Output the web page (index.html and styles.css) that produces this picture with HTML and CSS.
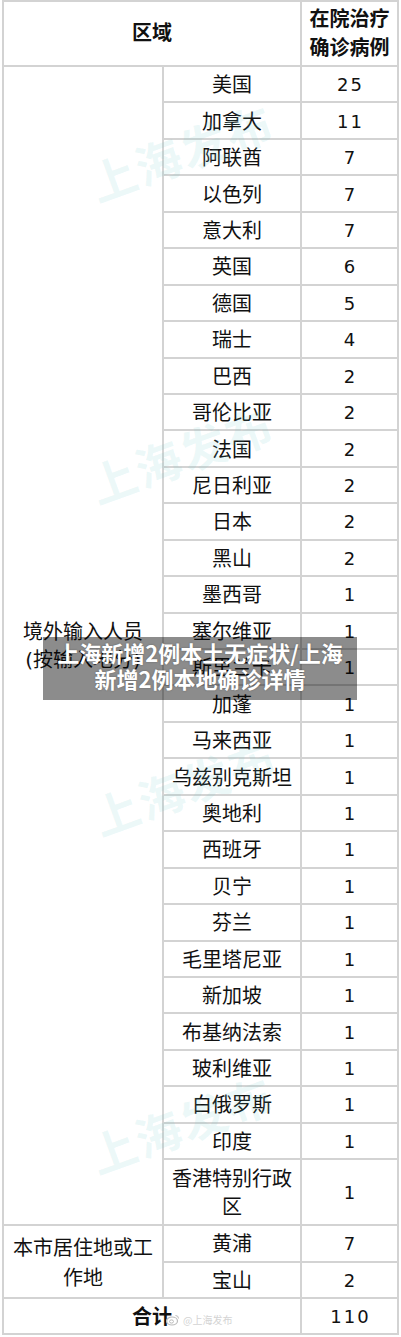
FILE: index.html
```html
<!DOCTYPE html>
<html lang="zh">
<head>
<meta charset="utf-8">
<title>上海新增2例本土无症状</title>
<link rel="stylesheet" href="styles.css">
</head>
<body>
<div class="page">
  <div class="grid">
    <div class="cell head span2">区域</div>
    <div class="cell head">在院治疗<br>确诊病例</div>
    <div class="cell group g1">境外输入人员<br>(按输入地分)</div>
    <div class="cell name">美国</div><div class="cell num">25</div>
    <div class="cell name">加拿大</div><div class="cell num">11</div>
    <div class="cell name">阿联酋</div><div class="cell num">7</div>
    <div class="cell name">以色列</div><div class="cell num">7</div>
    <div class="cell name">意大利</div><div class="cell num">7</div>
    <div class="cell name">英国</div><div class="cell num">6</div>
    <div class="cell name">德国</div><div class="cell num">5</div>
    <div class="cell name">瑞士</div><div class="cell num">4</div>
    <div class="cell name">巴西</div><div class="cell num">2</div>
    <div class="cell name">哥伦比亚</div><div class="cell num">2</div>
    <div class="cell name">法国</div><div class="cell num">2</div>
    <div class="cell name">尼日利亚</div><div class="cell num">2</div>
    <div class="cell name">日本</div><div class="cell num">2</div>
    <div class="cell name">黑山</div><div class="cell num">2</div>
    <div class="cell name">墨西哥</div><div class="cell num">1</div>
    <div class="cell name">塞尔维亚</div><div class="cell num">1</div>
    <div class="cell name">斯里兰卡</div><div class="cell num">1</div>
    <div class="cell name">加蓬</div><div class="cell num">1</div>
    <div class="cell name">马来西亚</div><div class="cell num">1</div>
    <div class="cell name">乌兹别克斯坦</div><div class="cell num">1</div>
    <div class="cell name">奥地利</div><div class="cell num">1</div>
    <div class="cell name">西班牙</div><div class="cell num">1</div>
    <div class="cell name">贝宁</div><div class="cell num">1</div>
    <div class="cell name">芬兰</div><div class="cell num">1</div>
    <div class="cell name">毛里塔尼亚</div><div class="cell num">1</div>
    <div class="cell name">新加坡</div><div class="cell num">1</div>
    <div class="cell name">布基纳法索</div><div class="cell num">1</div>
    <div class="cell name">玻利维亚</div><div class="cell num">1</div>
    <div class="cell name">白俄罗斯</div><div class="cell num">1</div>
    <div class="cell name">印度</div><div class="cell num">1</div>
    <div class="cell name">香港特别行政区</div><div class="cell num">1</div>
    <div class="cell group g2">本市居住地或工<br>作地</div>
    <div class="cell name">黄浦</div><div class="cell num">7</div>
    <div class="cell name">宝山</div><div class="cell num">2</div>
    <div class="cell head total span2">合计</div><div class="cell num">110</div>
  </div>

  <div class="wm wm1">上海发布</div>
  <div class="wm wm2">上海发布</div>
  <div class="wm wm3">上海发布</div>
  <div class="wm wm4">上海发布</div>

  <div class="weibo">
    <svg class="weibo-logo" width="14" height="12" viewBox="0 0 14 12"><ellipse cx="6" cy="7" rx="5.5" ry="4" fill="none" stroke="#bbb" stroke-width="1.2"/><ellipse cx="5.5" cy="7.5" rx="2" ry="1.6" fill="none" stroke="#bbb" stroke-width="1"/><path d="M9.5 1.5a3 3 0 0 1 3 3" fill="none" stroke="#bbb" stroke-width="1"/></svg>
    <span class="weibo-text">@上海发布</span>
  </div>

  <div class="caption">上海新增2例本土无症状/上海<br>新增2例本地确诊详情</div>
</div>
</body>
</html>
```

FILE: styles.css
```css
* { box-sizing: border-box; }
html, body { margin: 0; padding: 0; background: #fff; }
body {
  font-family: "DejaVu Sans", "Noto Sans CJK SC", sans-serif;
  color: #111;
}
.page {
  position: relative;
  width: 401px;
  height: 1337px;
  overflow: hidden;
}
.grid {
  margin-left: 2px;
  width: 397px;
  display: grid;
  grid-template-columns: 158px 136px 95px;
  grid-template-rows: 63px repeat(30, 34.45px) 64px 34.45px 34.45px 34.45px;
  gap: 2px;
  padding: 2px;
  background: #d3d3d3;
}
.cell {
  background: #fff;
  display: flex;
  align-items: center;
  justify-content: center;
  text-align: center;
  font-size: 20px;
  line-height: 28px;
}
.head { font-weight: bold; line-height: 29px; }
.total { padding-top: 2px; }
.span2 { grid-column: 1 / span 2; }
.g1 { grid-column: 1; grid-row: 2 / span 31; }
.g2 { grid-column: 1; grid-row: 33 / span 2; line-height: 30px; padding-top: 2px; }
.name { padding: 2px 0 0; }
.num {
  font-family: "DejaVu Sans", sans-serif;
  font-size: 18px;
  letter-spacing: 2px;
  padding: 2px 0 0 2px;
}
.wm {
  position: absolute;
  font-family: "Noto Sans CJK SC", sans-serif;
  font-weight: bold;
  font-size: 46px;
  letter-spacing: 2px;
  color: rgba(110, 200, 200, 0.13);
  transform: rotate(-20deg);
  white-space: nowrap;
  pointer-events: none;
}
.wm1 { left: 85px; top: 118px; }
.wm2 { left: 85px; top: 420px; }
.wm3 { left: 88px; top: 752px; }
.wm4 { left: 85px; top: 1090px; }
.weibo {
  position: absolute;
  left: 166px;
  top: 1312px;
  display: flex;
  align-items: center;
  gap: 3px;
}
.weibo-text {
  font-family: "Noto Sans CJK SC", sans-serif;
  font-size: 10px;
  color: #d4d4d4;
}
.caption {
  position: absolute;
  left: 43px;
  top: 637px;
  width: 314px;
  height: 63px;
  padding-top: 2px;
  background: rgba(0, 0, 0, 0.45);
  color: #fff;
  font-family: "Noto Sans CJK SC", sans-serif;
  font-weight: bold;
  font-size: 22px;
  line-height: 26px;
  text-align: center;
  text-shadow: 0 0 2px rgba(0,0,0,0.3);
}
```
